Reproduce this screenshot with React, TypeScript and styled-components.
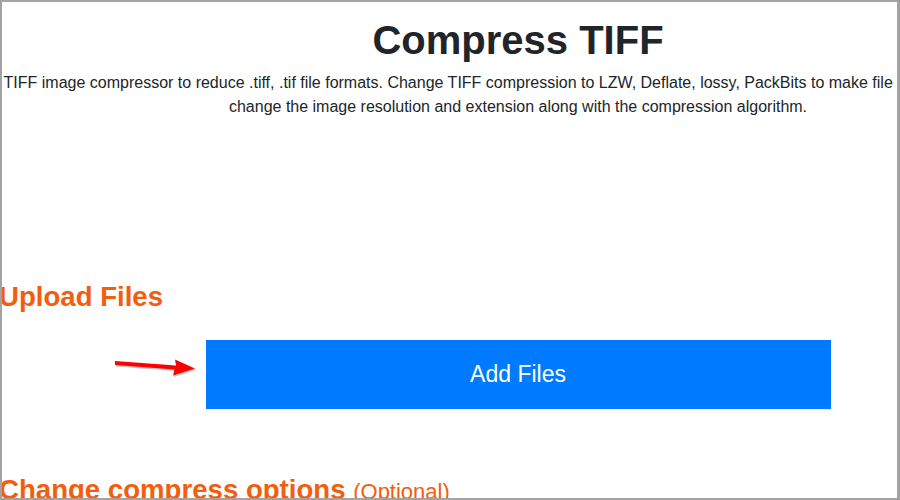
import React from "react";
import styled, { createGlobalStyle } from "styled-components";

const GlobalStyle = createGlobalStyle`
  html, body { margin: 0; padding: 0; background: #ffffff; }
  body { font-family: "Liberation Sans", Arial, sans-serif; }
  * { box-sizing: border-box; }
`;

const Frame = styled.div`
  width: 900px;
  height: 500px;
  border-style: solid;
  border-color: #a3a3a3;
  border-width: 2px 3px 2px 2px;
  overflow: hidden;
  background: #ffffff;
`;

const Page = styled.main`
  width: 1036px;
  margin-left: -2px;
  display: flex;
  flex-direction: column;
  font-family: "Liberation Sans", Arial, sans-serif;
  color: #212529;
`;

const Title = styled.h1`
  margin: 14px 0 7px;
  font-size: 40px;
  line-height: 48px;
  font-weight: 700;
  text-align: center;
  color: #212529;
`;

const Description = styled.p`
  margin: 0;
  font-size: 16px;
  line-height: 24px;
  text-align: center;
  color: #212529;
`;

const Line = styled.span`
  display: block;
  white-space: nowrap;
`;

const SectionTitle = styled.h2<{ $top: number }>`
  margin: ${(p) => p.$top}px 0 0 -1px;
  font-size: 27.6px;
  line-height: 34px;
  font-weight: 700;
  color: #f45d0b;
  white-space: nowrap;
`;

const Optional = styled.small`
  font-size: 22px;
  font-weight: 400;
  color: #f45d0b;
`;

const UploadRow = styled.div`
  position: relative;
  display: flex;
  justify-content: center;
  margin-top: 26px;
`;

const AddButton = styled.button`
  width: 625px;
  height: 69px;
  border: none;
  border-radius: 0;
  background: #007bff;
  color: #ffffff;
  font-family: "Liberation Sans", Arial, sans-serif;
  font-size: 23px;
  cursor: pointer;
`;

const Arrow = styled.svg`
  position: absolute;
  left: 112px;
  top: 18px;
  overflow: visible;
`;

export default function App() {
  return (
    <>
      <GlobalStyle />
      <Frame>
        <Page>
          <Title>Compress TIFF</Title>
          <Description>
            <Line>
              TIFF image compressor to reduce .tiff, .tif file formats. Change TIFF compression to LZW, Deflate, lossy, PackBits to make file size smaller. It also
            </Line>
            <Line>change the image resolution and extension along with the compression algorithm.</Line>
          </Description>
          <SectionTitle $top={161}>Upload Files</SectionTitle>
          <UploadRow>
            <Arrow width="86" height="24" viewBox="0 0 86 24">
              <g transform="translate(1 1.5)" opacity="0.35">
                <path d="M3 3 L64 7.5 L63 1.5 L83 10.5 L61 17.5 L62.5 11.5 L3 7 Z" fill="#555" />
              </g>
              <path d="M3 3 L64 7.5 L63 1.5 L83 10.5 L61 17.5 L62.5 11.5 L3 7 Z" fill="#ff0000" />
            </Arrow>
            <AddButton>Add Files</AddButton>
          </UploadRow>
          <SectionTitle $top={64}>
            Change compress options <Optional>(Optional)</Optional>
          </SectionTitle>
        </Page>
      </Frame>
    </>
  );
}
